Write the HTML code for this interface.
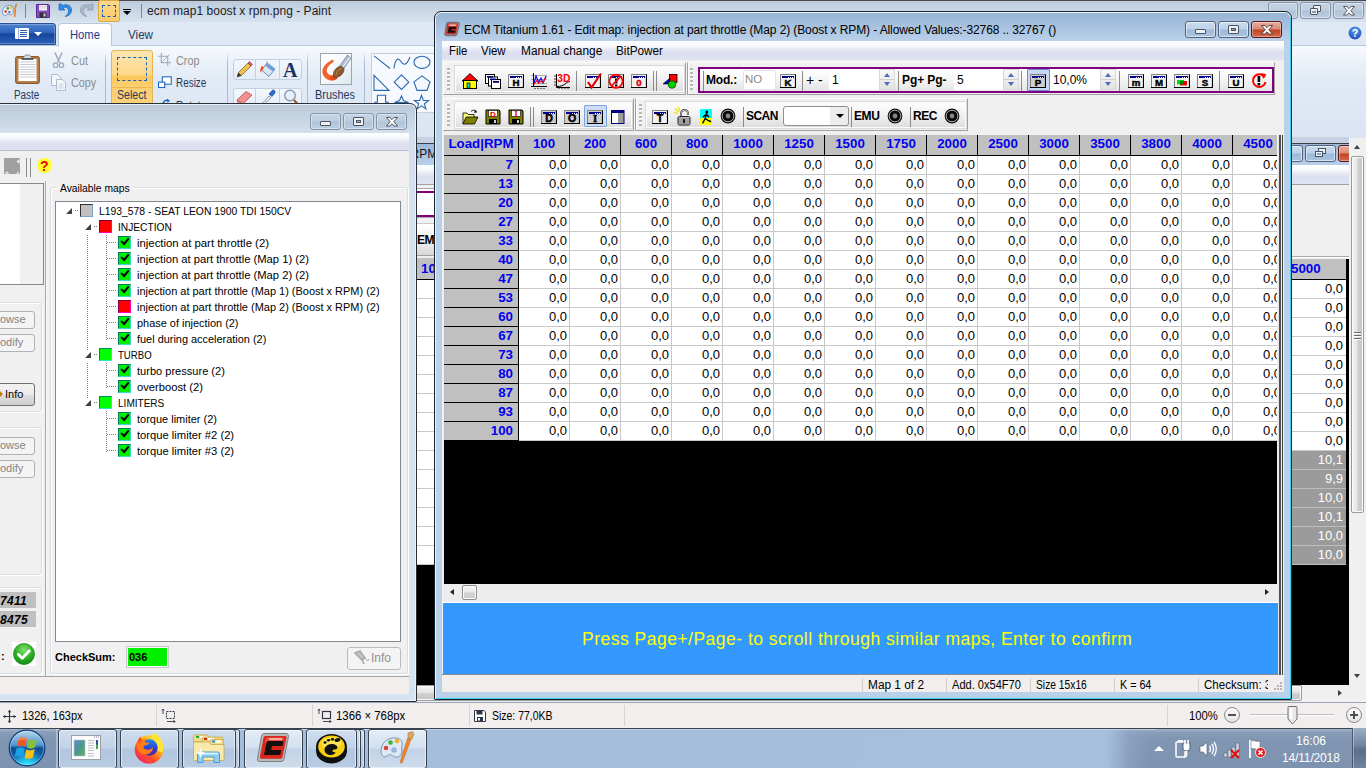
<!DOCTYPE html>
<html><head><meta charset="utf-8"><title>Paint</title>
<style>
*{box-sizing:border-box;margin:0;padding:0}
html,body{width:1366px;height:768px;overflow:hidden;background:#dfe9f5;font-family:"Liberation Sans",sans-serif;font-size:12px;color:#000}
.a{position:absolute}
.t{position:absolute;white-space:pre;line-height:1}
svg{position:absolute;overflow:visible}
/* ---------- paint ---------- */
#ptitle{left:0;top:0;width:1366px;height:22px;background:linear-gradient(#bccbdb 0,#c9d6e4 45%,#d7e2ee 100%);border-top:1px solid #4a4a4a}
#ptabs{left:0;top:22px;width:1366px;height:23px;background:#dfe9f5}
#pribbon{left:0;top:45px;width:1366px;height:93px;background:linear-gradient(#f7fafd 0,#ecf2f9 16%,#e0e9f5 40%,#dbe5f3 100%);border-top:1px solid #b6c6da}
.rsep{position:absolute;top:54px;width:1px;height:84px;background:linear-gradient(rgba(160,175,195,0),#a9b9cf 20%,#a9b9cf 100%)}
/* ---------- status / task ---------- */
#pstatus{left:0;top:702px;width:1366px;height:26px;background:#f1eeed;border-top:1px solid #9aa5b5}
#task{left:0;top:728px;width:1366px;height:40px;background:linear-gradient(#a3b4cb 0,#8a9eba 3px,#8196b3 9px,#7d92af 100%);border-top:1px solid #39424f}
#tband{left:56px;top:729px;box-shadow:inset 0 1px 0 rgba(255,255,255,.35);width:1100px;height:40px;background:linear-gradient(90deg,#a4bddb 0,#a6bfdd 95.5%,rgba(150,172,203,.5) 97.5%,rgba(129,150,179,0) 99.5%)}
.tb{position:absolute;top:729px;height:40px;border:1px solid #36424f;border-radius:3px;background:linear-gradient(#cfdeee 0,#c1d3e8 46%,#b1c6df 52%,#b8cce3 100%);box-shadow:inset 0 0 0 1px rgba(255,255,255,.5)}

/* ---------- ECM window ---------- */
#ecm{left:434px;top:11px;width:858px;height:689px;border:1px solid #1c2430;border-radius:7px 7px 1px 1px;background:linear-gradient(#97b3d3 0,#a7c1df 14px,#bad1ea 30px,#b9d1ea 100%);box-shadow:inset 0 0 0 1px #e9f2fb}
#ecm:after{content:"";position:absolute;right:0;top:6px;bottom:0;width:1px;background:#38d0f0}
#ecm:before{content:"";position:absolute;left:1px;right:0;bottom:0;height:1px;background:#38d0f0}
.cb{position:absolute;top:21px;width:31px;height:17px;border:1px solid #53627a;border-radius:3px;background:linear-gradient(#c9dbee 0,#bcd1e8 48%,#9db9d8 52%,#aac5e0 100%);box-shadow:inset 0 0 0 1px rgba(255,255,255,.55)}
.cb.x{border-color:#5a161a;background:linear-gradient(#e6ada0 0,#d98974 48%,#c0431f 52%,#d26a4c 100%);box-shadow:inset 0 0 0 1px rgba(255,255,255,.35)}
#emenu{left:442px;top:41px;width:842px;height:19px;background:linear-gradient(#fff 0,#f8f9fc 25%,#e7e9f4 45%,#dcdff0 60%,#dfe2f2 100%)}
#eclient{left:442px;top:60px;width:842px;height:632px;background:#f0f0f0}
.band{position:absolute;border:1px solid;border-color:#fff #a0a0a0 #a0a0a0 #fff;background:#f0f0f0}
.grip{position:absolute;width:3px;background:repeating-linear-gradient(#b5b5b5 0 2px,#fff 2px 3px,#f0f0f0 3px 4px)}
.tbx{position:absolute;border:1px solid #fcfcfc;background:linear-gradient(#fdfdfd 0,#f1f1f1 50%,#dedede 100%);box-shadow:0 0 0 1px #dadada}
.vs{position:absolute;width:1px;background:#8a8a8a;margin-top:1px;margin-bottom:1px}
.bt{position:absolute;white-space:pre;line-height:1;font-weight:bold;font-size:12px;letter-spacing:0;color:#000}
.inp{position:absolute;background:#fff;font-size:12px}
.spin{position:absolute;width:16px;height:21px;border:1px solid #d8d8d8;background:linear-gradient(#f8f8f8,#e3e3e3)}
.spin:before{content:"";position:absolute;left:4px;top:3px;border:3.5px solid transparent;border-top:0;border-bottom:4px solid #4c6cc0}
.spin:after{content:"";position:absolute;left:4px;bottom:3px;border:3.5px solid transparent;border-bottom:0;border-top:4px solid #4c6cc0}
.spin i{position:absolute;left:0;right:0;top:9px;height:1px;background:#d0d0d0}
#grid{left:444px;top:135px;width:833px;height:306px;background:#fff;overflow:hidden}
#gblack{left:444px;top:441px;width:833px;height:143px;background:#000}
.hc{position:absolute;top:0;height:21px;background:#c0c0c0;color:#0000f0;font-weight:bold;font-size:13.33px;line-height:18px;text-align:center;border-right:1px solid #000;border-bottom:1px solid #000;border-left:1px solid #000;white-space:pre}
.rh{position:absolute;left:0;width:75px;height:19px;background:#c0c0c0;color:#0000f0;font-weight:bold;font-size:13.33px;line-height:18px;text-align:right;padding-right:5px;border-right:1px solid #000;border-bottom:1px solid #000}
.row{position:absolute;left:75px;height:19px;width:780px;white-space:pre;font-size:13px;line-height:18px;color:#000;
 background:repeating-linear-gradient(90deg,transparent 0 50px,#c8c8c8 50px 51px);border-bottom:1px solid #c8c8c8}
.row span{display:inline-block;width:51px;text-align:right;padding-right:3px}
#ehs{left:444px;top:584px;width:833px;height:18px;background:#eeeded}
#eblue{left:443px;top:603px;width:835px;height:71px;background:#3399ff}
#estat{left:442px;top:675px;width:842px;height:17px;background:#f1eeed}
.sp{position:absolute;top:678px;height:15px;border-left:1px solid #cfcccb;font-size:12px;line-height:15px;padding-left:5px;white-space:pre}
.sp b{font-weight:normal;display:inline-block;transform-origin:0 50%}

/* ---------- left dialog ---------- */
#dlg{left:-10px;top:103px;width:427px;height:599px;border:1px solid #2b2f36;border-radius:7px 7px 1px 1px;background:linear-gradient(#bbcad9 0,#c5d4e2 14px,#d4e1ed 30px,#d6e3f1 100%);box-shadow:inset 0 0 0 1px #eaf1f8}
#dmenu{left:0;top:133px;width:409px;height:18px;background:linear-gradient(#fff 0,#f8f9fc 25%,#e7e9f4 45%,#dcdff0 60%,#dfe2f2 100%)}
#dclient{left:0;top:151px;width:409px;height:525px;background:#f0f0f0}
#dstat{left:0;top:676px;width:409px;height:18px;background:#f1eeed;border-top:1px solid #a6a6a6}
.cbi{position:absolute;top:113px;width:31px;height:17px;border:1px solid #8493a8;border-radius:3px;background:linear-gradient(#c5d4e4 0,#bccddf 48%,#b0c3d8 52%,#bdcee1 100%);box-shadow:inset 0 0 0 1px rgba(255,255,255,.4)}
.gb{position:absolute;border:1px solid #d5dfe5;border-radius:3px;box-shadow:inset 1px 1px 0 #fff,1px 1px 0 #fff}
.dbtn{position:absolute;border:1px solid #adb2b5;border-radius:3px;background:#f4f4f4;color:#838383;font-size:11px;line-height:15px;white-space:pre}
.tr{position:absolute;white-space:pre;font-size:11px;line-height:1;color:#000}
.ck{position:absolute;width:13px;height:13px;background:#00f000;border:1px solid;border-color:#007858 #38e0c0 #38e0c0 #007858}
.ck:after{content:"";position:absolute;left:2px;top:1px;width:6px;height:3px;border-left:2px solid #000;border-bottom:2px solid #000;transform:rotate(-50deg)}
.bx{position:absolute;width:13px;height:13px;border:1px solid}
.ex{position:absolute;width:0;height:0;border:3px solid transparent;border-right-color:#404040;border-bottom-color:#404040}
.dh{position:absolute;height:1px;background:repeating-linear-gradient(90deg,#808080 0 1px,transparent 1px 2px)}
.dv{position:absolute;width:1px;background:repeating-linear-gradient(#808080 0 1px,transparent 1px 2px)}

.rt{position:absolute;white-space:pre;line-height:1;font-size:12px;color:#1e395b;transform-origin:0 0}
.rt.d{color:#8d8d8d}
</style></head>
<body>
<!-- ================= PAINT BASE ================= -->
<div class="a" id="ptitle"></div>
<div class="a" id="ptabs"></div>
<div class="a" id="pribbon"></div>

<!-- ================= PAINT TOP ================= -->
<svg style="left:1px;top:2px" width="19" height="17" viewBox="0 0 17 16"><path d="M1 9c0-4 4-6.500 8-5.500 2 .5 2.500 2 2 3.500-.5 1.500.5 2.500-.5 4-1 1.500-2.500 1-3.500.5S5.500 11 4.500 12.500C3 13.500 1 12 1 9z" fill="#e8eef6" stroke="#7890b0" stroke-width=".9"/><circle cx="4" cy="9" r="1.200" fill="#e03030"/><circle cx="6" cy="6" r="1.200" fill="#30a030"/><circle cx="9" cy="5.500" r="1.200" fill="#f0c020"/><circle cx="7.500" cy="9.500" r="1.200" fill="#4080d0"/><path d="M13.500 1l1.500 1-1.500 4h-1.500z" fill="#c89050"/><path d="M12 6h1.800l-.5 8h-1.300z" fill="#f08020"/></svg>
<div class="a" style="left:25px;top:4px;width:1px;height:14px;background:#7a8594"></div>
<svg style="left:36px;top:4px" width="14" height="14" viewBox="0 0 14 14"><path d="M.5.500h12l1 1v12H.5z" fill="#8a4cc0" stroke="#5a2a90"/><rect x="3" y="1" width="8" height="5.500" fill="#f4f0f8"/><path d="M3 2.500h8M3 4h8" stroke="#c8c0d8" stroke-width=".6"/><rect x="3.500" y="8.500" width="7" height="5" fill="#303030"/><rect x="7.500" y="9.500" width="2" height="3" fill="#d0d0d0"/></svg>
<svg style="left:58px;top:3px" width="15" height="15" viewBox="0 0 15 15"><path d="M1 1v6h6L4.800 4.800C7 3.500 10 4.500 10.500 7.500c.3 2.500-1 4.500-3.500 6 4-.5 6.500-3 6.500-6.500C13.500 3 9 .5 5 2.500L3.200 1z" fill="#2f8fe8" stroke="#1560b8" stroke-width=".7"/></svg>
<svg style="left:79px;top:3px" width="15" height="15" viewBox="0 0 15 15"><path d="M14 1v6H8l2.200-2.200C8 3.500 5 4.500 4.500 7.500 4.200 10 5.500 12 8 13.500 4 13 1.500 10.500 1.500 7 1.500 3 6 .5 10 2.500L11.800 1z" fill="#a9b8cc" stroke="#8a9ab2" stroke-width=".7"/></svg>
<div class="a" style="left:98px;top:0;width:22px;height:22px;border:1px solid #d9aa4a;border-radius:2px;background:linear-gradient(#fcd88a,#fbcb6c)"></div>
<div class="a" style="left:102px;top:5px;width:14px;height:12px;border:1px dashed #1560b8"></div>
<div class="a" style="left:123px;top:9px;width:8px;height:1px;background:#000"></div><div class="a" style="left:123px;top:11px;border:4px solid transparent;border-bottom:0;border-top:4px solid #000"></div>
<div class="a" style="left:141px;top:4px;width:1px;height:14px;background:#7a8594"></div>
<div class="t" style="left:147px;top:5px;font-size:12px;color:#1e1e1e;letter-spacing:.02px">ecm map1 boost x rpm.png - Paint</div>
<div class="cbi" style="left:1268px;top:2px;height:17px;width:30px"></div>
<div class="cbi" style="left:1300px;top:2px;height:17px;width:31px"></div>
<div class="cbi" style="left:1333px;top:2px;height:17px;width:31px"></div>
<div class="a" style="left:1313px;top:5px;width:8px;height:7px;border:1px solid #4a5568;background:#f0f0f0;border-radius:1px"></div><div class="a" style="left:1310px;top:8px;width:8px;height:7px;border:1px solid #4a5568;background:#f0f0f0;border-radius:1px"></div><div class="a" style="left:1312px;top:11px;width:4px;height:2px;background:#8a9ab4;border:0"></div>
<svg style="left:1342.500px;top:6px" width="12" height="9.500" viewBox="0 0 14 11"><path d="M.5 .5h4L7 3l2.500-2.500h4L9.200 5.500l4.300 5h-4L7 8 4.500 10.500h-4L4.800 5.500z" fill="#f8f8f8" stroke="#4a4f58" stroke-width="1.100" stroke-linejoin="round"/></svg>
<svg style="left:1347px;top:25px" width="16" height="16" viewBox="0 0 18 18"><defs><radialGradient id="hg" cx=".5" cy=".3" r=".8"><stop offset="0" stop-color="#5ea0f0"/><stop offset="1" stop-color="#1038b0"/></radialGradient></defs><circle cx="9" cy="9" r="8" fill="url(#hg)" stroke="#dfe9f8" stroke-width="1.500"/><text x="9" y="13.500" text-anchor="middle" style="font-family:'Liberation Sans';font-weight:bold;font-size:12px" fill="#fff">?</text></svg>
<div class="a" style="left:-3px;top:23px;width:59px;height:22px;border:1px solid #2a4f98;border-radius:3px 3px 0 0;background:linear-gradient(#4d83d0 0,#2c62b8 45%,#17439a 50%,#2a64bc 100%);box-shadow:inset 0 0 0 1px rgba(255,255,255,.25)"></div>
<div class="a" style="left:15px;top:28px;width:14px;height:11px;background:#fff;border-radius:1px"></div><div class="a" style="left:20px;top:30px;width:7px;height:7px;background:repeating-linear-gradient(#2c62b8 0 1px,#fff 1px 2px)"></div><div class="a" style="left:18px;top:28px;width:1px;height:11px;background:#9ab0d0"></div>
<div class="a" style="left:34px;top:32px;border:4px solid transparent;border-bottom:0;border-top:4px solid #fff"></div>
<div class="a" style="left:58px;top:23px;width:54px;height:23px;border:1px solid #b9c9dd;border-bottom:0;border-radius:4px 4px 0 0;background:linear-gradient(#ffffff,#f8fbfe)"></div>
<div class="rt" style="left:70px;top:29px;color:#1d3b8c;transform:scaleX(0.937)">Home</div>
<div class="rt" style="left:128px;top:29px;transform:scaleX(0.969)">View</div>
<svg style="left:15px;top:53px" width="25" height="31" viewBox="0 0 25 31"><rect x=".7" y="3.700" width="23.600" height="26.600" rx="2" fill="#b98250" stroke="#8a5a2c" stroke-width="1.200"/><rect x="3.500" y="6" width="18" height="22" fill="#fff"/><path d="M4.500 9h16M4.500 11.500h16M4.500 14h16M4.500 16.500h16M4.500 19h16M4.500 21.500h16M4.500 24h16" stroke="#b4bcc8" stroke-width=".8"/><path d="M7 6l3.500-4h4L18 6z" fill="#d8dce0" stroke="#707880" stroke-width=".8"/><rect x="6.500" y="5" width="12" height="1.800" fill="#505860"/></svg>
<div class="rt" style="left:13.7px;top:89px;transform:scaleX(0.824)">Paste</div>
<svg style="left:53px;top:52px" width="11" height="17" viewBox="0 0 11 17"><path d="M2 .5l4.500 10M9 .5L4.500 10.500" stroke="#a0acc0" stroke-width="1.600" fill="none"/><circle cx="2.600" cy="13.200" r="2.200" fill="none" stroke="#a0acc0" stroke-width="1.300"/><circle cx="8.400" cy="13.200" r="2.200" fill="none" stroke="#a0acc0" stroke-width="1.300"/></svg>
<div class="rt d" style="left:70.6px;top:55px;transform:scaleX(0.910)">Cut</div>
<svg style="left:51px;top:74px" width="16" height="17" viewBox="0 0 16 17"><path d="M.5.500h6l3 3v8h-9z" fill="#f4f6fa" stroke="#b0bccc"/><path d="M5.500 5.500h6l3 3v8h-9z" fill="#f4f6fa" stroke="#b0bccc"/><path d="M7.500 10h5M7.500 12h5M7.500 14h5" stroke="#c0c8d4" stroke-width=".8"/></svg>
<div class="rt d" style="left:70.6px;top:77px;transform:scaleX(0.899)">Copy</div>
<div class="rsep" style="left:105px;top:52px;height:52px"></div>
<div class="a" style="left:111px;top:50px;width:42px;height:60px;border:1px solid #e3b552;border-radius:3px;background:linear-gradient(#fde6b0 0,#fcd88c 24px,#fbc85c 25px,#fbcf72 37px,#fbd27c 100%)"></div>
<div class="a" style="left:112px;top:87px;width:40px;height:1px;background:#e8b850"></div>
<div class="a" style="left:117px;top:57px;width:30px;height:24px;border:1px dashed #1560b8"></div>
<div class="rt" style="left:116.5px;top:89px;transform:scaleX(0.881)">Select</div>
<svg style="left:158px;top:53px" width="13" height="13" viewBox="0 0 16 16"><path d="M4 0v12h12M0 4h12v12" stroke="#9aa6ba" stroke-width="1.300" fill="none"/><path d="M5 11L14 2" stroke="#9aa6ba" stroke-width="1"/></svg>
<div class="rt d" style="left:175.7px;top:55px;transform:scaleX(0.899)">Crop</div>
<svg style="left:158px;top:76px" width="14" height="13" viewBox="0 0 18 16"><rect x="5.500" y=".7" width="11.500" height="9.500" fill="#fff" stroke="#1560b8" stroke-width="1.300"/><rect x=".7" y="7.500" width="8" height="7" fill="#fff" stroke="#1560b8" stroke-width="1.300"/></svg>
<div class="rt" style="left:175.7px;top:77px;transform:scaleX(0.826)">Resize</div>
<svg style="left:162px;top:99px" width="12" height="6" viewBox="0 0 12 6"><path d="M1 6c0-3 2-5 5-5" stroke="#1560b8" stroke-width="1.600" fill="none"/><path d="M5 0l3 1.500L5.500 4z" fill="#1560b8"/></svg>
<div class="rt" style="left:175.7px;top:100px;height:4px;overflow:hidden;transform:scaleX(0.862)">Rotate</div>
<div class="rsep" style="left:227px;top:52px;height:52px"></div>
<div class="a" style="left:233px;top:59px;width:69px;height:21px;border:1px solid #c3d0e2;border-radius:3px;background:linear-gradient(#f3f7fc,#e4ecf7)"></div>
<div class="a" style="left:255px;top:60px;width:1px;height:19px;background:#c3d0e2"></div><div class="a" style="left:279px;top:60px;width:1px;height:19px;background:#c3d0e2"></div>
<div class="a" style="left:233px;top:88px;width:69px;height:21px;border:1px solid #c3d0e2;border-radius:3px;background:linear-gradient(#f3f7fc,#e4ecf7)"></div>
<div class="a" style="left:255px;top:89px;width:1px;height:19px;background:#c3d0e2"></div><div class="a" style="left:279px;top:89px;width:1px;height:19px;background:#c3d0e2"></div>
<svg style="left:236px;top:61px" width="17" height="17" viewBox="0 0 17 17"><path d="M1 16l1.500-4.500L12 2l3 3-9.500 9.500z" fill="#f0c050" stroke="#8a6a20" stroke-width=".8"/><path d="M12 2l1.500-1.500 3 3L15 5z" fill="#e06060" stroke="#803030" stroke-width=".6"/><path d="M1 16l1.500-4.500 3 3z" fill="#303030"/></svg>
<svg style="left:259px;top:60px" width="18" height="18" viewBox="0 0 18 18"><path d="M8 3l8 6-6 7.500L2.500 10z" fill="#d8e6f6" stroke="#6080a8" stroke-width=".9"/><path d="M8 3l8 6-2 2.500L6 5.500z" fill="#6aa0e0"/><path d="M3.500 5.500C1.500 7 .8 10 1.500 13c.8-2 1.500-3 3-4z" fill="#f05010"/><path d="M8 1.500v5" stroke="#a0a8b8" stroke-width="1.200"/></svg>
<div class="t" style="left:283px;top:59px;font:bold 20px 'Liberation Serif';color:#1c2f60">A</div>
<svg style="left:236px;top:90px" width="17" height="15" viewBox="0 0 17 15"><path d="M1 10l9-8.500 6 3.500-9 9-4.500-.5z" fill="#f09090" stroke="#c05050" stroke-width=".8"/><path d="M1 10l5.500 3.500" stroke="#c05050" stroke-width=".8"/></svg>
<svg style="left:260px;top:89px" width="17" height="16" viewBox="0 0 17 16"><path d="M2 15l7-8 2 2-7.500 6.500z" fill="#e8eef4" stroke="#7888a0" stroke-width=".8"/><path d="M9 5l3-3.500c1.500-1.500 4 .5 2.800 2.500L12 7.500z" fill="#2a70d0" stroke="#1a4890" stroke-width=".7"/></svg>
<svg style="left:283px;top:89px" width="17" height="16" viewBox="0 0 17 16"><circle cx="7" cy="6.500" r="5.300" fill="#e4f0fa" stroke="#8a9ab0" stroke-width="1.400"/><path d="M11 11l4 4.500" stroke="#a06030" stroke-width="2.400"/></svg>
<div class="rsep" style="left:307px;top:52px;height:52px"></div>
<div class="a" style="left:320px;top:53px;width:32px;height:32px;border:1px solid #a0a4a8;background:linear-gradient(135deg,#fff 0,#f4f8fc 50%,#dce8f0 100%)"></div>
<svg style="left:321px;top:54px" width="30" height="30" viewBox="0 0 30 30"><path d="M11.500 5.500C9 7 3 10 1.500 16c-1 5 3 9.500 8 10.500 3 .5 5-.5 6.500-2l-3-4c-3 1.500-6 .5-7-2.500-1-3.500 2-7.500 6.500-10 .5-1.500-.5-2.500-1.500-2.500z" fill="#f0622a"/><path d="M8 24c2.500 2.500 6 2 8.500.5l-2.500-3.500c-2 1.200-4 2.200-6 3z" fill="#d8481a"/><path d="M26.500 1L30 4 21.500 16.500 17.500 13.500z" fill="#aebfd6" stroke="#586a84" stroke-width=".6"/><path d="M28.800 3.300L20.500 15" stroke="#fff" stroke-width="1.200" opacity=".8"/><path d="M12.500 21c-.5-4 3-8 6.500-8.500 2.500-.3 4.500 1.500 4 4-.8 3.500-4 6.500-8 7-1.500.2-2.300-1-2.500-2.500z" fill="#8c5a30" stroke="#5c3818" stroke-width=".6"/><path d="M15 21c.5-3 2.500-5.500 5-6.500" stroke="#b88a58" stroke-width="1" fill="none"/></svg>
<div class="rt" style="left:315px;top:89px;transform:scaleX(0.908)">Brushes</div>
<div class="rsep" style="left:364px;top:52px;height:52px"></div>
<div class="a" style="left:371px;top:53px;width:70px;height:60px;border:1px solid #c3d0e2;background:#f6f9fd"></div>
<svg style="left:371px;top:53px" width="66" height="60" viewBox="0 0 66 60" fill="#f4f8fc" stroke="#2a68b2" stroke-width="1.100"><path d="M3 2.900L19 15.500" fill="none"/><path d="M23 15.500c1-9 4-11.500 6.500-7.500s5.500 6 9.500-4" fill="none"/><ellipse cx="51" cy="9.300" rx="8" ry="6.100"/><path d="M3 22.400V37.400H18z"/><path d="M30.500 21.900l7.300 7.300-7.300 7.300-7.300-7.300z"/><path d="M51 22.900l8 6-3 8.500H46l-3-8.500z"/><path d="M3 49.300H6.400V42.300H14.600V49.300H18" fill="none"/><path d="M30.500 42.900l2 4.600 5 2h-14l5-2z"/><path d="M50.5 42.3L52.3 47.4L57.6 47.5L53.4 50.7L54.9 55.9L50.5 52.8L46.1 55.9L47.6 50.7L43.4 47.5L48.7 47.4z"/></svg>

<!-- ================= CANVAS STRIPS ================= -->
<div class="a" style="left:417px;top:137px;width:17px;height:548px;overflow:hidden;background:#fff">
<div class="a" style="left:0;top:0;width:17px;height:6px;background:#c7d1e3"></div><div class="a" style="left:0;top:6px;width:17px;height:1px;background:#3a3f48"></div>
<div class="a" style="left:0;top:7px;width:17px;height:21px;background:linear-gradient(#9db8d8,#b7cfe9)"></div>
<div class="t" style="left:-6.500px;top:11px;font-size:12px;color:#101820">RPM)</div>
<div class="a" style="left:0;top:28px;width:17px;height:19px;background:linear-gradient(#fff 0,#f8f9fc 25%,#e7e9f4 45%,#dcdff0 60%,#dfe2f2 100%)"></div>
<div class="a" style="left:0;top:47px;width:17px;height:7px;background:linear-gradient(#a0a0a0 0 1px,#f0f0f0 1px 4px,#a8a8a8 4px 5px,#fff 5px)"></div>
<div class="a" style="left:0;top:54px;width:17px;height:2px;background:#800080"></div>
<div class="a" style="left:0;top:78px;width:17px;height:2px;background:#800080"></div>
<div class="a" style="left:0;top:80px;width:17px;height:9px;background:linear-gradient(#a8a8a8 0 1px,#f0f0f0 1px 6px,#c8c8c8 6px 7px,#fff 7px)"></div>
<div class="a" style="left:0;top:89px;width:17px;height:29px;background:linear-gradient(#fdfdfd 0,#f1f1f1 50%,#d6d6d6 100%)"></div>
<div class="a" style="left:0;top:118px;width:17px;height:3px;background:linear-gradient(#a0a0a0 0 1px,#f0f0f0 1px)"></div>
<div class="bt" style="left:0;top:97px;letter-spacing:-.4px">EM</div>
<div class="a" style="left:0;top:121px;width:17px;height:22px;background:#c0c0c0;border-bottom:1px solid #000"></div>
<div class="t" style="left:4px;top:125px;font-size:13.33px;font-weight:bold;color:#0000f0">1000</div>
<div class="a" style="left:0;top:161px;width:17px;height:1px;background:#c8c8c8"></div>
<div class="a" style="left:0;top:180px;width:17px;height:1px;background:#c8c8c8"></div>
<div class="a" style="left:0;top:199px;width:17px;height:1px;background:#c8c8c8"></div>
<div class="a" style="left:0;top:218px;width:17px;height:1px;background:#c8c8c8"></div>
<div class="a" style="left:0;top:237px;width:17px;height:1px;background:#c8c8c8"></div>
<div class="a" style="left:0;top:256px;width:17px;height:1px;background:#c8c8c8"></div>
<div class="a" style="left:0;top:275px;width:17px;height:1px;background:#c8c8c8"></div>
<div class="a" style="left:0;top:294px;width:17px;height:1px;background:#c8c8c8"></div>
<div class="a" style="left:0;top:313px;width:17px;height:1px;background:#c8c8c8"></div>
<div class="a" style="left:0;top:332px;width:17px;height:1px;background:#c8c8c8"></div>
<div class="a" style="left:0;top:351px;width:17px;height:1px;background:#c8c8c8"></div>
<div class="a" style="left:0;top:370px;width:17px;height:1px;background:#c8c8c8"></div>
<div class="a" style="left:0;top:389px;width:17px;height:1px;background:#c8c8c8"></div>
<div class="a" style="left:0;top:408px;width:17px;height:1px;background:#c8c8c8"></div>
<div class="a" style="left:0;top:427px;width:17px;height:1px;background:#c8c8c8"></div>
<div class="a" style="left:0;top:428px;width:17px;height:120px;background:#000"></div>
</div>
<div class="a" style="left:1292px;top:137px;width:57px;height:548px;overflow:hidden;background:#f0f0f0">
<div class="a" style="left:0;top:0;width:57px;height:6px;background:#c7d1e3"></div><div class="a" style="left:0;top:6px;width:57px;height:1px;background:#3a3f48"></div>
<div class="a" style="left:0;top:7px;width:57px;height:21px;background:linear-gradient(#9db8d8,#b7cfe9)"></div>
<div class="cb" style="left:-20px;top:8px"></div><div class="cb" style="left:13px;top:8px"></div><div class="cb x" style="left:46px;top:8px"></div>
<div class="a" style="left:26px;top:11px;width:8px;height:6px;border:1px solid #4a5568;background:#f0f0f0"></div><div class="a" style="left:23px;top:14px;width:8px;height:6px;border:1px solid #4a5568;background:#f0f0f0"></div><div class="a" style="left:25px;top:16px;width:4px;height:2px;background:#8aa6c8"></div>
<div class="a" style="left:0;top:28px;width:57px;height:19px;background:linear-gradient(#fff 0,#f8f9fc 25%,#e7e9f4 45%,#dcdff0 60%,#dfe2f2 100%)"></div>
<div class="a" style="left:0;top:47px;width:57px;height:1px;background:#a0a0a0"></div>
<div class="a" style="left:0;top:119px;width:57px;height:2px;background:linear-gradient(#a8a8a8 0 1px,#fff 1px)"></div>
<div class="a" style="left:0;top:122px;width:54px;height:21px;background:#c0c0c0;border-bottom:1px solid #000"></div>
<div class="t" style="left:-1px;top:125px;font-size:13.33px;font-weight:bold;color:#0000f0">5000</div>
<div class="a" style="left:0;top:143px;width:54px;height:19px;background:#fff;border-bottom:1px solid #c8c8c8;color:#000;font-size:13px;line-height:18px;text-align:right;padding-right:3px">0,0</div>
<div class="a" style="left:0;top:162px;width:54px;height:19px;background:#fff;border-bottom:1px solid #c8c8c8;color:#000;font-size:13px;line-height:18px;text-align:right;padding-right:3px">0,0</div>
<div class="a" style="left:0;top:181px;width:54px;height:19px;background:#fff;border-bottom:1px solid #c8c8c8;color:#000;font-size:13px;line-height:18px;text-align:right;padding-right:3px">0,0</div>
<div class="a" style="left:0;top:200px;width:54px;height:19px;background:#fff;border-bottom:1px solid #c8c8c8;color:#000;font-size:13px;line-height:18px;text-align:right;padding-right:3px">0,0</div>
<div class="a" style="left:0;top:219px;width:54px;height:19px;background:#fff;border-bottom:1px solid #c8c8c8;color:#000;font-size:13px;line-height:18px;text-align:right;padding-right:3px">0,0</div>
<div class="a" style="left:0;top:238px;width:54px;height:19px;background:#fff;border-bottom:1px solid #c8c8c8;color:#000;font-size:13px;line-height:18px;text-align:right;padding-right:3px">0,0</div>
<div class="a" style="left:0;top:257px;width:54px;height:19px;background:#fff;border-bottom:1px solid #c8c8c8;color:#000;font-size:13px;line-height:18px;text-align:right;padding-right:3px">0,0</div>
<div class="a" style="left:0;top:276px;width:54px;height:19px;background:#fff;border-bottom:1px solid #c8c8c8;color:#000;font-size:13px;line-height:18px;text-align:right;padding-right:3px">0,0</div>
<div class="a" style="left:0;top:295px;width:54px;height:19px;background:#fff;border-bottom:1px solid #c8c8c8;color:#000;font-size:13px;line-height:18px;text-align:right;padding-right:3px">0,0</div>
<div class="a" style="left:0;top:314px;width:54px;height:19px;background:#9b9b9b;border-bottom:1px solid #bdbdbd;color:#fff;font-size:13px;line-height:18px;text-align:right;padding-right:3px">10,1</div>
<div class="a" style="left:0;top:333px;width:54px;height:19px;background:#9b9b9b;border-bottom:1px solid #bdbdbd;color:#fff;font-size:13px;line-height:18px;text-align:right;padding-right:3px">9,9</div>
<div class="a" style="left:0;top:352px;width:54px;height:19px;background:#9b9b9b;border-bottom:1px solid #bdbdbd;color:#fff;font-size:13px;line-height:18px;text-align:right;padding-right:3px">10,0</div>
<div class="a" style="left:0;top:371px;width:54px;height:19px;background:#9b9b9b;border-bottom:1px solid #bdbdbd;color:#fff;font-size:13px;line-height:18px;text-align:right;padding-right:3px">10,1</div>
<div class="a" style="left:0;top:390px;width:54px;height:19px;background:#9b9b9b;border-bottom:1px solid #bdbdbd;color:#fff;font-size:13px;line-height:18px;text-align:right;padding-right:3px">10,0</div>
<div class="a" style="left:0;top:409px;width:54px;height:19px;background:#9b9b9b;border-bottom:1px solid #bdbdbd;color:#fff;font-size:13px;line-height:18px;text-align:right;padding-right:3px">10,0</div>
<div class="a" style="left:0;top:428px;width:57px;height:120px;background:#000"></div>
<div class="a" style="left:54px;top:122px;width:3px;height:426px;background:#000"></div>
</div>
<div class="a" style="left:1349px;top:138px;width:17px;height:547px;background:#f0f0f0"></div>
<div class="a" style="left:1354px;top:145px;border:3.500px solid transparent;border-top:0;border-bottom:4px solid #404040"></div>
<div class="a" style="left:1351px;top:156px;width:13px;height:357px;border:1px solid #9a9a9a;border-radius:2px;background:linear-gradient(90deg,#f4f4f4 0,#e6e6e6 45%,#cfcfcf 55%,#c6c6c6 100%);box-shadow:inset 0 0 0 1px #fafafa"></div>
<div class="a" style="left:1354px;top:332px;width:7px;height:2px;background:linear-gradient(#6a6a6a 0 1px,#fff 1px)"></div>
<div class="a" style="left:1354px;top:335px;width:7px;height:2px;background:linear-gradient(#6a6a6a 0 1px,#fff 1px)"></div>
<div class="a" style="left:1354px;top:338px;width:7px;height:2px;background:linear-gradient(#6a6a6a 0 1px,#fff 1px)"></div>
<div class="a" style="left:1354px;top:674px;border:3.500px solid transparent;border-bottom:0;border-top:4px solid #404040"></div>
<div class="a" style="left:0;top:685px;width:1349px;height:17px;background:#f0f0f0"></div>
<div class="a" style="left:380px;top:685px;width:922px;height:16px;border:1px solid #9a9a9a;border-radius:2px;background:linear-gradient(#f4f4f4 0,#e6e6e6 45%,#cfcfcf 55%,#c6c6c6 100%);box-shadow:inset 0 0 0 1px #fafafa"></div>
<div class="a" style="left:1338px;top:690px;border:3.500px solid transparent;border-right:0;border-left:4px solid #404040"></div>
<div class="a" style="left:1349px;top:685px;width:17px;height:17px;background:#f0f0f0"></div>

<!-- ================= LEFT DIALOG ================= -->
<div class="a" id="dlg"></div>
<div class="cbi" style="left:310px"></div><div class="cbi" style="left:343px"></div><div class="cbi" style="left:376px"></div>
<div class="a" style="left:320px;top:121px;width:11px;height:5px;background:#f0f0f0;border:1px solid #4a5568;border-radius:1px"></div>
<div class="a" style="left:353px;top:117px;width:11px;height:9px;background:#f0f0f0;border:1px solid #4a5568;border-radius:1px"></div><div class="a" style="left:356px;top:120px;width:5px;height:3px;background:#a9bbd0;border:1px solid #4a5568"></div>
<svg style="left:385.500px;top:116.500px" width="12" height="9.500" viewBox="0 0 14 11"><path d="M.5 .5h4L7 3l2.500-2.500h4L9.200 5.500l4.300 5h-4L7 8 4.500 10.500h-4L4.800 5.500z" fill="#f8f8f8" stroke="#4a4f58" stroke-width="1.100" stroke-linejoin="round"/></svg>
<div class="a" id="dmenu"></div><div class="a" style="left:0;top:150px;width:409px;height:1px;background:#b9bfd0"></div><div class="a" id="dclient"></div><div class="a" id="dstat"></div>
<div class="a" style="left:4px;top:158px;width:16px;height:16px;background:#a0a0a0"></div>
<svg style="left:4px;top:158px" width="16" height="16" viewBox="0 0 16 16"><path d="M15.500 1v5l-3-2.500zM.5 15.500h5l-2.500-2zM15.500 15.500h-3.500l1.800-1.800z" fill="#f4f4f4"/></svg>
<div class="vs" style="left:26px;top:157px;height:19px"></div><div class="vs" style="left:30px;top:157px;height:19px"></div>
<div class="a" style="left:37px;top:158px;width:15px;height:15px;border-radius:50%;background:#ffff30;background-image:radial-gradient(#fff 30%,transparent 31%);background-size:2px 2px"></div><div class="t" style="left:40px;top:159px;font-size:14px;font-weight:bold;color:#e80000">?</div>
<div class="a" style="left:0;top:183px;width:44px;height:102px;background:linear-gradient(90deg,#fff 0 20px,#f0f0f0 20px);border:1px solid #828790;border-left:0"></div>
<div class="gb" style="left:-5px;top:302px;width:47px;height:110px"></div>
<div class="dbtn" style="left:-5px;top:311px;width:40px;height:18px;padding-left:4px">owse</div>
<div class="dbtn" style="left:-5px;top:334px;width:40px;height:18px;padding-left:4px">odify</div>
<div class="dbtn" style="left:-5px;top:383px;width:40px;height:23px;padding-left:9px;line-height:20px;color:#000;border-color:#707070;background:linear-gradient(#f2f2f2 0,#ebebeb 50%,#dddddd 51%,#cfcfcf 100%)">Info</div>
<div class="a" style="left:0;top:391px;border:3px solid transparent;border-left:3px solid #c08000;border-right:0"></div>
<div class="gb" style="left:-5px;top:427px;width:47px;height:148px"></div>
<div class="dbtn" style="left:-5px;top:437px;width:40px;height:18px;padding-left:4px">owse</div>
<div class="dbtn" style="left:-5px;top:460px;width:40px;height:18px;padding-left:4px">odify</div>
<div class="gb" style="left:-5px;top:587px;width:47px;height:87px"></div>
<div class="a" style="left:0;top:592px;width:36px;height:16px;background:#c0c0c0"></div><div class="t" style="left:0;top:594px;font:italic bold 12px 'Liberation Sans';letter-spacing:.3px">7411</div>
<div class="a" style="left:0;top:611px;width:36px;height:16px;background:#c0c0c0"></div><div class="t" style="left:0;top:613px;font:italic bold 12px 'Liberation Sans';letter-spacing:.3px">8475</div>
<div class="t" style="left:1px;top:651px;font-size:11px;font-weight:bold">:</div>
<div class="a" style="left:12px;top:642px;width:24px;height:24px;background:#fff"></div>
<svg style="left:13px;top:643px" width="22" height="22" viewBox="0 0 22 22"><defs><radialGradient id="gg" cx=".5" cy=".3" r=".7"><stop offset="0" stop-color="#7fe06a"/><stop offset=".6" stop-color="#2fb025"/><stop offset="1" stop-color="#138a12"/></radialGradient></defs><circle cx="11" cy="11" r="10.500" fill="url(#gg)" stroke="#1c8a1c" stroke-width=".8"/><path d="M5.500 11.500l3.800 3.800 7-7.500" stroke="#fff" stroke-width="2.800" fill="none" stroke-linecap="round" stroke-linejoin="round"/></svg>
<div class="a" style="left:45px;top:181px;width:2px;height:495px;background:linear-gradient(90deg,#a6a6a6 0 1px,#fbfbfb 1px)"></div><div class="gb" style="left:50px;top:187px;width:358px;height:487px"></div>
<div class="a" style="left:57px;top:183px;width:76px;height:12px;background:#f0f0f0"></div><div class="t" style="left:60px;top:183px;font-size:11px;transform-origin:0 0;transform:scaleX(.935)">Available maps</div>
<div class="a" style="left:55px;top:201px;width:346px;height:441px;background:#fff;border:1px solid #828790"></div>
<div class="ex" style="left:66px;top:208px"></div><div class="dh" style="left:75px;top:210px;width:4px"></div>
<div class="bx" style="left:80px;top:204px;background:#c0c0c0;border-color:#303030 #7da2ce #7da2ce #303030"></div>
<div class="tr" style="left:99px;top:206px;transform-origin:0 0;transform:scaleX(0.941)">L193_578 - SEAT LEON 1900 TDI 150CV</div>
<div class="ex" style="left:85px;top:224px"></div><div class="dh" style="left:94px;top:226px;width:4px"></div>
<div class="bx" style="left:99px;top:220px;background:#ff0000;border-color:#800040 #ff00c0 #ff00c0 #800040"></div>
<div class="tr" style="left:118px;top:222px;transform-origin:0 0;transform:scaleX(0.928)">INJECTION</div>
<div class="dh" style="left:107px;top:242px;width:10px"></div>
<div class="ck" style="left:118px;top:236px"></div>
<div class="tr" style="left:137px;top:238px;transform-origin:0 0;transform:scaleX(1.033)">injection at part throttle (2)</div>
<div class="dh" style="left:107px;top:258px;width:10px"></div>
<div class="ck" style="left:118px;top:252px"></div>
<div class="tr" style="left:137px;top:254px;transform-origin:0 0;transform:scaleX(1.019)">injection at part throttle (Map 1) (2)</div>
<div class="dh" style="left:107px;top:274px;width:10px"></div>
<div class="ck" style="left:118px;top:268px"></div>
<div class="tr" style="left:137px;top:270px;transform-origin:0 0;transform:scaleX(1.019)">injection at part throttle (Map 2) (2)</div>
<div class="dh" style="left:107px;top:290px;width:10px"></div>
<div class="ck" style="left:118px;top:284px"></div>
<div class="tr" style="left:137px;top:286px;transform-origin:0 0;transform:scaleX(0.997)">injection at part throttle (Map 1) (Boost x RPM) (2)</div>
<div class="dh" style="left:107px;top:306px;width:10px"></div>
<div class="bx" style="left:118px;top:300px;background:#ff0000;border-color:#800040 #ff00c0 #ff00c0 #800040"></div>
<div class="tr" style="left:137px;top:302px;transform-origin:0 0;transform:scaleX(0.997)">injection at part throttle (Map 2) (Boost x RPM) (2)</div>
<div class="dh" style="left:107px;top:322px;width:10px"></div>
<div class="ck" style="left:118px;top:316px"></div>
<div class="tr" style="left:137px;top:318px;transform-origin:0 0;transform:scaleX(0.994)">phase of injection (2)</div>
<div class="dh" style="left:107px;top:338px;width:10px"></div>
<div class="ck" style="left:118px;top:332px"></div>
<div class="tr" style="left:137px;top:334px;transform-origin:0 0;transform:scaleX(0.993)">fuel during acceleration (2)</div>
<div class="ex" style="left:85px;top:352px"></div><div class="dh" style="left:94px;top:354px;width:4px"></div>
<div class="bx" style="left:99px;top:348px;background:#00ff00;border-color:#008858 #30e8c0 #30e8c0 #008858"></div>
<div class="tr" style="left:118px;top:350px;transform-origin:0 0;transform:scaleX(0.873)">TURBO</div>
<div class="dh" style="left:107px;top:370px;width:10px"></div>
<div class="ck" style="left:118px;top:364px"></div>
<div class="tr" style="left:137px;top:366px;transform-origin:0 0;transform:scaleX(1.005)">turbo pressure (2)</div>
<div class="dh" style="left:107px;top:386px;width:10px"></div>
<div class="ck" style="left:118px;top:380px"></div>
<div class="tr" style="left:137px;top:382px;transform-origin:0 0;transform:scaleX(1.018)">overboost (2)</div>
<div class="ex" style="left:85px;top:400px"></div><div class="dh" style="left:94px;top:402px;width:4px"></div>
<div class="bx" style="left:99px;top:396px;background:#00ff00;border-color:#008858 #30e8c0 #30e8c0 #008858"></div>
<div class="tr" style="left:118px;top:398px;transform-origin:0 0;transform:scaleX(0.913)">LIMITERS</div>
<div class="dh" style="left:107px;top:418px;width:10px"></div>
<div class="ck" style="left:118px;top:412px"></div>
<div class="tr" style="left:137px;top:414px;transform-origin:0 0;transform:scaleX(0.999)">torque limiter (2)</div>
<div class="dh" style="left:107px;top:434px;width:10px"></div>
<div class="ck" style="left:118px;top:428px"></div>
<div class="tr" style="left:137px;top:430px;transform-origin:0 0;transform:scaleX(1.018)">torque limiter #2 (2)</div>
<div class="dh" style="left:107px;top:450px;width:10px"></div>
<div class="ck" style="left:118px;top:444px"></div>
<div class="tr" style="left:137px;top:446px;transform-origin:0 0;transform:scaleX(1.018)">torque limiter #3 (2)</div>
<div class="dv" style="left:87px;top:235px;height:115px"></div><div class="dv" style="left:87px;top:363px;height:35px"></div>
<div class="dv" style="left:106px;top:235px;height:105px"></div>
<div class="dv" style="left:106px;top:363px;height:25px"></div>
<div class="dv" style="left:106px;top:411px;height:41px"></div>
<div class="t" style="left:55px;top:652px;font-size:11px;font-weight:bold">CheckSum:</div>
<div class="a" style="left:126px;top:646px;width:43px;height:22px;border:1px solid #c8c8c8;background:#f8f8f8"></div><div class="a" style="left:128px;top:648px;width:39px;height:18px;background:#00f000"></div><div class="t" style="left:129px;top:652px;font-size:11px;font-weight:bold">036</div>
<div class="dbtn" style="left:347px;top:647px;width:54px;height:23px;line-height:20px;padding-left:23px;font-size:12px;color:#909090;border-color:#b8bcbf">Info</div>
<svg style="left:353px;top:650px" width="18" height="16" viewBox="0 0 18 16"><path d="M2 3l5-2 5 7-3 2zM9 10l2 4" stroke="#a8a8a8" stroke-width="1.600" fill="#c4c4c4"/><path d="M13 9l1.500 2 1.500-2" stroke="#a8a8a8" fill="none"/></svg>


<!-- ================= ECM WINDOW ================= -->
<div class="a" id="ecm"></div>
<div class="cb" style="left:1185px"></div>
<div class="cb" style="left:1218px"></div>
<div class="cb x" style="left:1251px"></div>
<div class="a" id="emenu"></div>
<div class="a" id="eclient"></div>
<svg style="left:444px;top:21px" width="16" height="16" viewBox="0 0 17 16"><path d="M4 .800h10.500a1.800 1.800 0 0 1 1.700 2.200L14 13.300a2.300 2.300 0 0 1-2.200 1.900H2.300A1.600 1.600 0 0 1 .8 13.200L2.600 2.600A2.200 2.200 0 0 1 4 .8z" fill="#8c8c8c" stroke="#4a4040" stroke-width=".6"/><path d="M4.600 2.200h9a1 1 0 0 1 1 1.300l-1.800 9a1.500 1.500 0 0 1-1.400 1.200H3.200a1 1 0 0 1-1-1.200L3.500 3.300a1.300 1.300 0 0 1 1.100-1.100z" fill="#d8281e"/><path d="M5 3h8.500l-.4 2H4.600z" fill="#f47a6a"/><path d="M5.200 5.500h8l-.5 2.400H8.400l-.3 1.700h4.200l-.5 2.400H3.900z" fill="#1a1010"/><path d="M6 4h6.500" stroke="#ffe0d8" stroke-width=".9"/></svg>
<div class="t" style="left:464px;top:24px;font-size:12px;letter-spacing:-.105px">ECM Titanium 1.61 - Edit map: injection at part throttle (Map 2) (Boost x RPM) - Allowed Values:-32768 .. 32767 ()</div>
<div class="a" style="left:1195px;top:29px;width:11px;height:5px;background:#f0f0f0;border:1px solid #4a5568;border-radius:1px"></div>
<div class="a" style="left:1228px;top:25px;width:11px;height:9px;background:#f0f0f0;border:1px solid #4a5568;border-radius:1px"></div><div class="a" style="left:1231px;top:28px;width:5px;height:3px;background:#8aa6c8;border:1px solid #4a5568"></div>
<svg style="left:1260.500px;top:24.500px" width="12" height="9.500" viewBox="0 0 14 11"><path d="M.5 .5h4L7 3l2.500-2.500h4L9.200 5.500l4.300 5h-4L7 8 4.500 10.500h-4L4.800 5.500z" fill="#f4f4f4" stroke="#4a3030" stroke-width="1" stroke-linejoin="round"/></svg>
<div class="t" style="left:449.1px;top:45px;font-size:12px;transform-origin:0 0;transform:scaleX(0.94)">File</div>
<div class="t" style="left:481.3px;top:45px;font-size:12px;transform-origin:0 0;transform:scaleX(0.953)">View</div>
<div class="t" style="left:520.5px;top:45px;font-size:12px;transform-origin:0 0;transform:scaleX(0.99)">Manual change</div>
<div class="t" style="left:616.3px;top:45px;font-size:12px;transform-origin:0 0;transform:scaleX(0.977)">BitPower</div>
<svg width="0" height="0" style="display:none"><defs>
<symbol id="w" viewBox="0 0 16 16"><rect x="0" y="1" width="16" height="14" fill="#f2f2f2"/><path d="M.5 15V1.5H16" stroke="#808080" fill="none"/><path d="M0 14.500H15.500V1.500" stroke="#000" fill="none" stroke-width="1.2"/><rect x="2" y="3" width="12" height="2" fill="#000090"/><rect x="8" y="4" width="1" height="1" fill="#fff"/><rect x="10" y="4" width="1" height="1" fill="#fff"/><rect x="12" y="4" width="1" height="1" fill="#fff"/></symbol>
<symbol id="wg" viewBox="0 0 16 16"><rect x="0" y="1" width="16" height="14" fill="#cfcfcf"/><path d="M.5 15V1.5H16" stroke="#808080" fill="none"/><path d="M0 14.500H15.500V1.500" stroke="#000" fill="none" stroke-width="1.2"/><rect x="2" y="3" width="12" height="2" fill="#000090"/><rect x="8" y="4" width="1" height="1" fill="#fff"/><rect x="10" y="4" width="1" height="1" fill="#fff"/><rect x="12" y="4" width="1" height="1" fill="#fff"/></symbol>
<symbol id="fl" viewBox="0 0 16 16"><path d="M1 1h13l1 1v13H1z" fill="#808000" stroke="#000"/><rect x="3.5" y="1.5" width="9" height="6" fill="#fff" stroke="#000" stroke-width=".6"/><rect x="4" y="10" width="8" height="5" fill="#000"/><rect x="9" y="11" width="2" height="3" fill="#d0d0d0"/></symbol>
<symbol id="kn" viewBox="0 0 16 16"><circle cx="8" cy="8" r="7.400" fill="#0a0a0a"/><circle cx="8" cy="8" r="5.900" fill="none" stroke="#d8d8d8" stroke-width=".8"/><circle cx="8" cy="8" r="2.400" fill="#858585"/></symbol>
</defs></svg>
<div class="band" style="left:443px;top:62px;width:243px;height:33px"></div>
<div class="grip" style="left:447px;top:68px;height:22px"></div>
<div class="tbx" style="left:455px;top:66px;width:229px;height:26px"></div>
<svg style="left:462px;top:73px" width="16" height="16" viewBox="0 0 16 16"><path d="M0 8L8 .6 16 8z" fill="#ff0000" stroke="#000" stroke-width=".8"/><rect x="1.5" y="7.5" width="13" height="8" fill="#ffff00" stroke="#000"/><rect x="5" y="10" width="3" height="5" fill="#00e0e0" stroke="#000" stroke-width=".7"/></svg>
<svg style="left:485px;top:73px" width="16" height="16" viewBox="0 0 16 16"><g fill="#fff" stroke="#000"><rect x=".5" y="1.5" width="9" height="9"/><rect x="3.5" y="4" width="9" height="9"/><rect x="6.5" y="6.5" width="9" height="9"/></g><g fill="#000080"><rect x="2" y="3" width="6" height="1.6"/><rect x="5" y="5.5" width="6" height="1.6"/><rect x="8" y="8" width="6" height="1.8"/></g></svg>
<svg style="left:508px;top:73px" width="16" height="16"><use href="#w"/><text x="8" y="13" text-anchor="middle" style="font-family:'Liberation Sans';font-weight:bold;font-size:9.7px" fill="#000" stroke="#000" stroke-width=".45" paint-order="stroke">H</text></svg>
<svg style="left:531px;top:73px" width="16" height="16" viewBox="0 0 16 16"><g stroke="#9a9a9a" stroke-width=".8"><path d="M0 2.5h16M0 6.5h16M0 10.5h16"/></g><path d="M2.5 0v14M0 13.5h16" stroke="#000" fill="none"/><path d="M4 15v1M7 15v1M10 15v1M13 15v1" stroke="#000"/><path d="M3 10l2-7 2.5 6L10 5l2 5 3-7" stroke="#0000ff" fill="none" stroke-width="1.1"/><path d="M3 11.5l2.5-4 2 3L10 8l2 1.5 3-5.5" stroke="#ff0000" fill="none" stroke-width="1.1"/></svg>
<svg style="left:554px;top:73px" width="16" height="16" viewBox="0 0 16 16"><path d="M2.5 1v13.5H16" stroke="#000" fill="none"/><path d="M0 3h2M0 6h2M0 9h2M0 12h2M5 14.5v1.5M8 14.5v1.5M11 14.5v1.5M14 14.5v1.5" stroke="#000" stroke-width=".8"/><path d="M3 13.5c4 0 6-1 8-2.5s3-2 5-2.5" stroke="#000" fill="none"/><text x="9.8" y="9" text-anchor="middle" font-family="Liberation Sans" font-weight="bold" font-size="11.5" fill="#ff0000" textLength="13" lengthAdjust="spacingAndGlyphs">3D</text></svg>
<div class="vs" style="left:576px;top:70px;height:20px"></div>
<svg style="left:585px;top:73px" width="16" height="16"><use href="#w"/><path d="M3 9l3.5 5.5L16 .5" stroke="#e00000" stroke-width="2.2" fill="none"/></svg>
<svg style="left:608px;top:73px" width="16" height="16"><use href="#w"/><rect x="7" y="5.5" width="2.4" height="5" fill="#000"/><rect x="7" y="11.5" width="2.4" height="2" fill="#000"/><circle cx="8" cy="8.3" r="6.6" fill="none" stroke="#ff0000" stroke-width="1.8"/><path d="M3.5 13L12.5 3.6" stroke="#ff0000" stroke-width="1.8"/></svg>
<svg style="left:631px;top:73px" width="16" height="16"><use href="#w"/><text x="8" y="13" text-anchor="middle" style="font-family:'Liberation Sans';font-weight:bold;font-size:9.7px" fill="#e00000" stroke="#e00000" stroke-width=".45" paint-order="stroke">0</text></svg>
<div class="vs" style="left:653px;top:70px;height:20px"></div><div class="vs" style="left:656px;top:70px;height:20px"></div>
<svg style="left:662px;top:73px" width="16" height="16" viewBox="0 0 16 16"><rect x="7.5" y="1.5" width="7.5" height="8" fill="#ff0000" stroke="#000" stroke-width=".8"/><path d="M1 11L8 5v6z" fill="#0000c0" stroke="#000" stroke-width=".6"/><circle cx="10" cy="11.5" r="3.8" fill="#00d000" stroke="#004000" stroke-width=".7"/></svg>
<div class="band" style="left:687px;top:62px;width:588px;height:33px;border-left-color:#a0a0a0"></div>
<div class="a" style="left:688px;top:63px;width:1px;height:31px;background:#fff"></div>
<div class="grip" style="left:690px;top:68px;height:22px"></div>
<div class="a" style="left:698px;top:67px;width:575.500px;height:26px;border:2px solid #800080;background:linear-gradient(#fff 0,#f6f6f6 45%,#e4e4e4 100%)"></div>
<div class="vs" style="left:703px;top:70px;height:20px"></div>
<div class="bt" style="left:706px;top:74px;letter-spacing:-.2px">Mod.:</div>
<div class="inp" style="left:743px;top:70px;width:33px;height:20px;border:1px solid #e3e3e3;border-radius:2px"></div><div class="t" style="left:745px;top:74px;font-size:11.5px;color:#8a8a8a">NO</div>
<svg style="left:780px;top:73px" width="16" height="16"><use href="#w"/><text x="8" y="13" text-anchor="middle" style="font-family:'Liberation Sans';font-weight:bold;font-size:9.7px" fill="#000" stroke="#000" stroke-width=".45" paint-order="stroke">K</text></svg>
<div class="vs" style="left:802px;top:70px;height:20px"></div>
<div class="t" style="left:806px;top:73px;font-size:14px;letter-spacing:0">+ -</div>
<div class="inp" style="left:829px;top:70px;width:50px;height:20px"></div><div class="t" style="left:832px;top:74px;font-size:12px">1</div>
<div class="spin" style="left:879px;top:69px"><i></i></div>
<div class="vs" style="left:898px;top:70px;height:20px"></div>
<div class="bt" style="left:902px;top:74px;letter-spacing:-.1px">Pg+ Pg-</div>
<div class="inp" style="left:954px;top:70px;width:49px;height:20px"></div><div class="t" style="left:957px;top:74px;font-size:12px">5</div>
<div class="spin" style="left:1003px;top:69px"><i></i></div>
<div class="vs" style="left:1021px;top:70px;height:20px"></div>
<div class="a" style="left:1027px;top:69px;width:23px;height:22px;border:1px solid #6b8fd6;background:#c9d8f2;border-radius:1px"></div>
<svg style="left:1030px;top:73px" width="16" height="16"><use href="#wg"/><text x="8" y="13" text-anchor="middle" style="font-family:'Liberation Sans';font-weight:bold;font-size:9.7px" fill="#000" stroke="#000" stroke-width=".45" paint-order="stroke">P</text></svg>
<div class="inp" style="left:1050px;top:70px;width:50px;height:20px"></div><div class="t" style="left:1053px;top:74px;font-size:12px">10,0%</div>
<div class="spin" style="left:1100px;top:69px"><i></i></div>
<div class="vs" style="left:1119px;top:70px;height:20px"></div>
<svg style="left:1128px;top:73px" width="16" height="16"><use href="#w"/><text x="8" y="13" text-anchor="middle" style="font-family:'Liberation Sans';font-weight:bold;font-size:9.7px" fill="#000" stroke="#000" stroke-width=".45" paint-order="stroke">m</text></svg>
<svg style="left:1151px;top:73px" width="16" height="16"><use href="#w"/><text x="8" y="13" text-anchor="middle" style="font-family:'Liberation Sans';font-weight:bold;font-size:9.7px" fill="#000" stroke="#000" stroke-width=".45" paint-order="stroke">M</text></svg>
<svg style="left:1174px;top:73px" width="16" height="16"><use href="#w"/><rect x="3" y="7" width="7" height="4.500" fill="#00e000"/><rect x="6" y="8" width="7" height="4.500" fill="#f00000"/><rect x="6" y="8" width="4" height="3.500" fill="#008000"/></svg>
<svg style="left:1197px;top:73px" width="16" height="16"><use href="#w"/><text x="8" y="13" text-anchor="middle" style="font-family:'Liberation Sans';font-weight:bold;font-size:9.7px" fill="#000" stroke="#000" stroke-width=".45" paint-order="stroke">S</text></svg>
<div class="vs" style="left:1219px;top:70px;height:20px"></div>
<svg style="left:1228px;top:73px" width="16" height="16"><use href="#w"/><text x="8" y="13" text-anchor="middle" style="font-family:'Liberation Sans';font-weight:bold;font-size:9.7px" fill="#000" stroke="#000" stroke-width=".45" paint-order="stroke">U</text></svg>
<svg style="left:1251px;top:72px" width="17" height="17" viewBox="0 0 17 17"><path d="M13.8 5.2A6.4 6.4 0 1 0 14.6 10" stroke="#ff0000" stroke-width="2" fill="none"/><path d="M9.5 1l6 1.2-3.2 4.6z" fill="#ff0000"/><rect x="6.6" y="4" width="2.6" height="6" fill="#000"/><rect x="6.6" y="11" width="2.6" height="2.4" fill="#000"/></svg>
<div class="band" style="left:443px;top:98px;width:191px;height:33px"></div>
<div class="grip" style="left:447px;top:104px;height:22px"></div>
<div class="tbx" style="left:455px;top:102px;width:177px;height:26px"></div>
<svg style="left:462px;top:109px" width="16" height="16" viewBox="0 0 16 16"><path d="M1 15V4h4l1 1.5h6V8" fill="#ffff80" stroke="#000" stroke-width=".8"/><path d="M1 15l3-7h12l-3.5 7z" fill="#808000" stroke="#000" stroke-width=".8"/><path d="M9 2.5c2-2 4.500-1.500 5.500.5" stroke="#000" fill="none" stroke-width=".9"/><path d="M13.300 1l1.700 2.600-3 .2z" fill="#000"/></svg>
<svg style="left:485px;top:109px" width="16" height="16"><use href="#fl"/><text x="8" y="7.5" text-anchor="middle" font-family="Liberation Sans" font-weight="bold" font-size="8" fill="#e00000">D</text></svg>
<svg style="left:508px;top:109px" width="16" height="16"><use href="#fl"/><text x="8" y="7.5" text-anchor="middle" font-family="Liberation Serif" font-weight="bold" font-size="8" fill="#e00000">I</text></svg>
<div class="vs" style="left:530px;top:106px;height:20px"></div><div class="vs" style="left:533px;top:106px;height:20px"></div>
<svg style="left:541px;top:109px" width="16" height="16"><use href="#wg"/><text x="8" y="13" text-anchor="middle" style="font-family:'Liberation Sans';font-weight:bold;font-size:10.6px" fill="#000" stroke="#000" stroke-width=".5" paint-order="stroke">D</text></svg>
<svg style="left:564px;top:109px" width="16" height="16"><use href="#wg"/><text x="8" y="13" text-anchor="middle" style="font-family:'Liberation Sans';font-weight:bold;font-size:10.6px" fill="#000" stroke="#000" stroke-width=".5" paint-order="stroke">O</text></svg>
<div class="a" style="left:584px;top:105px;width:23px;height:22px;border:1px solid #7da2e0;background:#cfdcf3;border-radius:1px"></div>
<svg style="left:587px;top:109px" width="16" height="16"><use href="#wg"/><text x="8" y="13" text-anchor="middle" style="font-family:'Liberation Serif';font-weight:bold;font-size:10.6px" fill="#000" stroke="#000" stroke-width=".5" paint-order="stroke">I</text></svg>
<svg style="left:611px;top:110px" width="14" height="14" viewBox="0 0 14 14"><rect x=".5" y=".5" width="12.500" height="13" fill="#9c9c9c" stroke="#000080"/><rect x="1" y="1" width="12" height="2" fill="#000080"/><rect x="1" y="3" width="6" height="10" fill="#fff"/></svg>
<div class="band" style="left:635px;top:98px;width:333px;height:33px;border-left-color:#a0a0a0"></div>
<div class="a" style="left:636px;top:99px;width:1px;height:31px;background:#fff"></div>
<div class="grip" style="left:639px;top:104px;height:22px"></div>
<div class="tbx" style="left:646px;top:102px;width:320px;height:26px"></div>
<svg style="left:652px;top:109px" width="16" height="16"><use href="#w"/><text x="8" y="13" text-anchor="middle" style="font-family:'Liberation Sans';font-weight:bold;font-size:10.6px" fill="#000" stroke="#000" stroke-width=".5" paint-order="stroke">T</text></svg>
<svg style="left:674px;top:107px" width="18" height="19" viewBox="0 0 18 19"><path d="M7 10V6.500a3.500 3.500 0 0 1 7 0V8" fill="none" stroke="#404040" stroke-width="2"/><path d="M7 10V6.500a3.500 3.500 0 0 1 7 0V8" fill="none" stroke="#d8d8d8" stroke-width=".8"/><rect x="4" y="9.500" width="12" height="8.500" rx="1.500" fill="#b8b8b8" stroke="#202020"/><path d="M5 12h10M5 14h10M5 16h10" stroke="#707070" stroke-width=".7"/><rect x="9" y="12" width="2" height="4" fill="#202020"/><path d="M0 5l4 2M1 1.500l3.500 3.500M4.500 0l1 4" stroke="#f0e000" stroke-width="1.200"/></svg>
<svg style="left:700px;top:109px" width="12" height="16" viewBox="0 0 12 16"><rect width="12" height="9" fill="#00ffff"/><rect y="9" width="12" height="7" fill="#ffff00"/><circle cx="6.800" cy="3" r="1.400" fill="#000"/><path d="M6.600 4.500L5.200 9.500M6.400 5.300L3.300 7.800M6.600 5.600L8.800 7.800M5.200 9.500L2.800 13.800M5.200 9.500L8 11.300l2.600 1.200" stroke="#000" stroke-width="1.400" fill="none" stroke-linecap="round"/></svg>
<svg style="left:720px;top:108px" width="16" height="16"><use href="#kn"/></svg>
<div class="vs" style="left:743px;top:106px;height:20px"></div>
<div class="bt" style="left:746px;top:110px;letter-spacing:-.55px">SCAN</div>
<div class="a" style="left:783px;top:106px;width:66px;height:20px;border:1px solid #8e8f8f;border-radius:3px;background:linear-gradient(90deg,#fff 0 46px,#ededed 46px)"></div>
<div class="a" style="left:836px;top:114px;border:4px solid transparent;border-bottom:0;border-top:4px solid #000"></div>
<div class="vs" style="left:851px;top:106px;height:20px"></div>
<div class="bt" style="left:854px;top:110px;letter-spacing:-.4px">EMU</div>
<svg style="left:887px;top:108px" width="16" height="16"><use href="#kn"/></svg>
<div class="vs" style="left:910px;top:106px;height:20px"></div>
<div class="bt" style="left:913px;top:110px;letter-spacing:-.4px">REC</div>
<svg style="left:944px;top:108px" width="16" height="16"><use href="#kn"/></svg>
<div class="a" id="grid">
<div class="hc" style="left:0;width:75px;border-left:0">Load|RPM</div>
<div class="hc" style="left:74px;width:52px">100</div>
<div class="hc" style="left:125px;width:52px">200</div>
<div class="hc" style="left:176px;width:52px">600</div>
<div class="hc" style="left:227px;width:52px">800</div>
<div class="hc" style="left:278px;width:52px">1000</div>
<div class="hc" style="left:329px;width:52px">1250</div>
<div class="hc" style="left:380px;width:52px">1500</div>
<div class="hc" style="left:431px;width:52px">1750</div>
<div class="hc" style="left:482px;width:52px">2000</div>
<div class="hc" style="left:533px;width:52px">2500</div>
<div class="hc" style="left:584px;width:52px">3000</div>
<div class="hc" style="left:635px;width:52px">3500</div>
<div class="hc" style="left:686px;width:52px">3800</div>
<div class="hc" style="left:737px;width:52px">4000</div>
<div class="hc" style="left:788px;width:52px">4500</div>
<div class="rh" style="top:21px">7</div><div class="row" style="top:21px"><span>0,0</span><span>0,0</span><span>0,0</span><span>0,0</span><span>0,0</span><span>0,0</span><span>0,0</span><span>0,0</span><span>0,0</span><span>0,0</span><span>0,0</span><span>0,0</span><span>0,0</span><span>0,0</span><span>0,0</span></div>
<div class="rh" style="top:40px">13</div><div class="row" style="top:40px"><span>0,0</span><span>0,0</span><span>0,0</span><span>0,0</span><span>0,0</span><span>0,0</span><span>0,0</span><span>0,0</span><span>0,0</span><span>0,0</span><span>0,0</span><span>0,0</span><span>0,0</span><span>0,0</span><span>0,0</span></div>
<div class="rh" style="top:59px">20</div><div class="row" style="top:59px"><span>0,0</span><span>0,0</span><span>0,0</span><span>0,0</span><span>0,0</span><span>0,0</span><span>0,0</span><span>0,0</span><span>0,0</span><span>0,0</span><span>0,0</span><span>0,0</span><span>0,0</span><span>0,0</span><span>0,0</span></div>
<div class="rh" style="top:78px">27</div><div class="row" style="top:78px"><span>0,0</span><span>0,0</span><span>0,0</span><span>0,0</span><span>0,0</span><span>0,0</span><span>0,0</span><span>0,0</span><span>0,0</span><span>0,0</span><span>0,0</span><span>0,0</span><span>0,0</span><span>0,0</span><span>0,0</span></div>
<div class="rh" style="top:97px">33</div><div class="row" style="top:97px"><span>0,0</span><span>0,0</span><span>0,0</span><span>0,0</span><span>0,0</span><span>0,0</span><span>0,0</span><span>0,0</span><span>0,0</span><span>0,0</span><span>0,0</span><span>0,0</span><span>0,0</span><span>0,0</span><span>0,0</span></div>
<div class="rh" style="top:116px">40</div><div class="row" style="top:116px"><span>0,0</span><span>0,0</span><span>0,0</span><span>0,0</span><span>0,0</span><span>0,0</span><span>0,0</span><span>0,0</span><span>0,0</span><span>0,0</span><span>0,0</span><span>0,0</span><span>0,0</span><span>0,0</span><span>0,0</span></div>
<div class="rh" style="top:135px">47</div><div class="row" style="top:135px"><span>0,0</span><span>0,0</span><span>0,0</span><span>0,0</span><span>0,0</span><span>0,0</span><span>0,0</span><span>0,0</span><span>0,0</span><span>0,0</span><span>0,0</span><span>0,0</span><span>0,0</span><span>0,0</span><span>0,0</span></div>
<div class="rh" style="top:154px">53</div><div class="row" style="top:154px"><span>0,0</span><span>0,0</span><span>0,0</span><span>0,0</span><span>0,0</span><span>0,0</span><span>0,0</span><span>0,0</span><span>0,0</span><span>0,0</span><span>0,0</span><span>0,0</span><span>0,0</span><span>0,0</span><span>0,0</span></div>
<div class="rh" style="top:173px">60</div><div class="row" style="top:173px"><span>0,0</span><span>0,0</span><span>0,0</span><span>0,0</span><span>0,0</span><span>0,0</span><span>0,0</span><span>0,0</span><span>0,0</span><span>0,0</span><span>0,0</span><span>0,0</span><span>0,0</span><span>0,0</span><span>0,0</span></div>
<div class="rh" style="top:192px">67</div><div class="row" style="top:192px"><span>0,0</span><span>0,0</span><span>0,0</span><span>0,0</span><span>0,0</span><span>0,0</span><span>0,0</span><span>0,0</span><span>0,0</span><span>0,0</span><span>0,0</span><span>0,0</span><span>0,0</span><span>0,0</span><span>0,0</span></div>
<div class="rh" style="top:211px">73</div><div class="row" style="top:211px"><span>0,0</span><span>0,0</span><span>0,0</span><span>0,0</span><span>0,0</span><span>0,0</span><span>0,0</span><span>0,0</span><span>0,0</span><span>0,0</span><span>0,0</span><span>0,0</span><span>0,0</span><span>0,0</span><span>0,0</span></div>
<div class="rh" style="top:230px">80</div><div class="row" style="top:230px"><span>0,0</span><span>0,0</span><span>0,0</span><span>0,0</span><span>0,0</span><span>0,0</span><span>0,0</span><span>0,0</span><span>0,0</span><span>0,0</span><span>0,0</span><span>0,0</span><span>0,0</span><span>0,0</span><span>0,0</span></div>
<div class="rh" style="top:249px">87</div><div class="row" style="top:249px"><span>0,0</span><span>0,0</span><span>0,0</span><span>0,0</span><span>0,0</span><span>0,0</span><span>0,0</span><span>0,0</span><span>0,0</span><span>0,0</span><span>0,0</span><span>0,0</span><span>0,0</span><span>0,0</span><span>0,0</span></div>
<div class="rh" style="top:268px">93</div><div class="row" style="top:268px"><span>0,0</span><span>0,0</span><span>0,0</span><span>0,0</span><span>0,0</span><span>0,0</span><span>0,0</span><span>0,0</span><span>0,0</span><span>0,0</span><span>0,0</span><span>0,0</span><span>0,0</span><span>0,0</span><span>0,0</span></div>
<div class="rh" style="top:287px">100</div><div class="row" style="top:287px"><span>0,0</span><span>0,0</span><span>0,0</span><span>0,0</span><span>0,0</span><span>0,0</span><span>0,0</span><span>0,0</span><span>0,0</span><span>0,0</span><span>0,0</span><span>0,0</span><span>0,0</span><span>0,0</span><span>0,0</span></div>
</div>
<div class="a" id="gblack"></div>

<div class="a" id="ehs"></div>
<div class="a" style="left:462px;top:585px;width:15px;height:15px;border:1px solid #8e8e8e;border-radius:2px;background:linear-gradient(#f6f6f6 0,#e9e9e9 48%,#d2d2d2 52%,#cdcdcd 100%);box-shadow:inset 0 0 0 1px #fbfbfb"></div>
<div class="a" style="left:450px;top:589px;border:3.500px solid transparent;border-left:0;border-right:4px solid #222"></div>
<div class="a" style="left:1265px;top:589px;border:3.500px solid transparent;border-right:0;border-left:4px solid #222"></div>
<div class="a" style="left:442px;top:602px;width:842px;height:1px;background:#fff"></div>
<div class="a" id="eblue"></div>
<div class="t" style="left:582px;top:630.500px;font-size:17.5px;color:#ffff00;letter-spacing:.49px">Press Page+/Page- to scroll through similar maps, Enter to confirm</div>
<div class="a" style="left:442px;top:674px;width:842px;height:1px;background:#8c8c8c"></div>
<div class="a" style="left:1278px;top:135px;width:6px;height:540px;background:linear-gradient(90deg,#e8e8e8 0 1px,#505050 1px 3px,#f0f0f0 3px 4px,#404040 4px 5px,#f0f0f0 5px)"></div><div class="a" id="estat"></div>
<div class="sp" style="left:862px;width:83px"><b style="transform:scaleX(0.988)">Map 1 of 2</b></div>
<div class="sp" style="left:946px;width:84px"><b style="transform:scaleX(0.922)">Add. 0x54F70</b></div>
<div class="sp" style="left:1030px;width:84px"><b style="transform:scaleX(0.856)">Size 15x16</b></div>
<div class="sp" style="left:1114px;width:84px"><b style="transform:scaleX(0.894)">K = 64</b></div>
<div class="sp" style="left:1198px;width:70px;overflow:hidden"><b style="transform:scaleX(0.960)">Checksum: 3</b></div>


<svg style="left:1273px;top:681px" width="10" height="10" viewBox="0 0 10 10" fill="#b8b4b2"><rect x="7" y="1" width="2" height="2"/><rect x="4" y="4" width="2" height="2"/><rect x="7" y="4" width="2" height="2"/><rect x="1" y="7" width="2" height="2"/><rect x="4" y="7" width="2" height="2"/><rect x="7" y="7" width="2" height="2"/></svg>
<!-- ================= PAINT STATUS ================= -->
<div class="a" id="pstatus"></div>
<svg style="left:3px;top:709.500px" width="13" height="13" viewBox="0 0 14 14"><path d="M7 0v14M0 7h14" stroke="#303848" stroke-width="1.200"/><path d="M7 0l-2 2.500h4zM7 14l-2-2.500h4zM0 7l2.500-2v4zM14 7l-2.500-2v4z" fill="#303848"/></svg>
<div class="t" style="left:21.500px;top:710px;font-size:12px;transform-origin:0 0;transform:scaleX(.917)">1326, 163px</div>
<div class="a" style="left:156px;top:705px;width:1px;height:21px;background:#d8d4d2"></div>
<div class="a" style="left:312px;top:705px;width:1px;height:21px;background:#d8d4d2"></div>
<div class="a" style="left:469px;top:705px;width:1px;height:21px;background:#d8d4d2"></div>
<div class="a" style="left:624px;top:705px;width:1px;height:21px;background:#d8d4d2"></div>
<div class="a" style="left:1167px;top:705px;width:1px;height:21px;background:#d8d4d2"></div>
<svg style="left:162px;top:709px" width="14" height="14" viewBox="0 0 14 14"><path d="M1 0v5M0 1.500l1-1.500 1 1.500" stroke="#303848" fill="none" stroke-width=".9"/><rect x="4.500" y="2.500" width="8" height="7" fill="none" stroke="#303848" stroke-dasharray="2 1"/><path d="M5 12.500h8M11.500 11l1.500 1.500-1.500 1.500" stroke="#303848" fill="none" stroke-width=".9"/></svg>
<svg style="left:318px;top:709px" width="14" height="14" viewBox="0 0 14 14"><path d="M1 0v5M0 1.500l1-1.500 1 1.500" stroke="#303848" fill="none" stroke-width=".9"/><rect x="4.500" y="2.500" width="8" height="7" fill="none" stroke="#303848" stroke-width="1.200"/><path d="M5 12.500h8M11.500 11l1.500 1.500-1.500 1.500" stroke="#303848" fill="none" stroke-width=".9"/></svg>
<div class="t" style="left:335.700px;top:710px;font-size:12px;transform-origin:0 0;transform:scaleX(.948)">1366 × 768px</div>
<svg style="left:474px;top:710px" width="12" height="12" viewBox="0 0 12 12"><path d="M.5.500h9.500l1.500 1.500v9.500H.5z" fill="#fff" stroke="#303848"/><rect x="2.500" y="1" width="6" height="3.500" fill="#303848"/><rect x="3" y="7" width="6" height="4.500" fill="#303848"/><rect x="4" y="8" width="2" height="2.500" fill="#fff"/></svg>
<div class="t" style="left:492px;top:710px;font-size:12px;transform-origin:0 0;transform:scaleX(.872)">Size: 77,0KB</div>
<div class="t" style="left:1189px;top:710px;font-size:12px;transform-origin:0 0;transform:scaleX(.94)">100%</div>
<div class="a" style="left:1224px;top:707px;width:16px;height:16px;border:1px solid #8a8a8a;border-radius:50%;background:linear-gradient(#fdfdfd,#e4e4e4)"></div><div class="a" style="left:1228px;top:714px;width:8px;height:2px;background:#505050"></div>
<div class="a" style="left:1250px;top:714px;width:84px;height:2px;background:linear-gradient(#bdbdbd 0 1px,#fff 1px)"></div>
<svg style="left:1287px;top:706px" width="11" height="19" viewBox="0 0 11 19"><path d="M1 1.500a1 1 0 0 1 1-1h7a1 1 0 0 1 1 1V13l-4.500 5L1 13z" fill="#e8e8e8" stroke="#707070"/><path d="M2.500 2h3v11.500l-3-1z" fill="#fafafa"/></svg>
<div class="a" style="left:1346px;top:707px;width:16px;height:16px;border:1px solid #8a8a8a;border-radius:50%;background:linear-gradient(#fdfdfd,#e4e4e4)"></div><div class="a" style="left:1350px;top:714px;width:8px;height:2px;background:#505050"></div><div class="a" style="left:1353px;top:711px;width:2px;height:8px;background:#505050"></div>

<!-- ================= TASKBAR ================= -->
<div class="a" id="task"></div><div class="a" id="tband"></div>
<svg style="left:8px;top:729px" width="38" height="38" viewBox="0 0 38 38"><defs><linearGradient id="og" x1="0" y1="0" x2="0" y2="1"><stop offset="0" stop-color="#b9d6ec"/><stop offset=".42" stop-color="#4f97cf"/><stop offset=".5" stop-color="#0e4f95"/><stop offset=".8" stop-color="#0b5aa6"/><stop offset="1" stop-color="#19b8ee"/></linearGradient><radialGradient id="og2" cx=".5" cy="1.02" r=".55"><stop offset="0" stop-color="#30e8ff" stop-opacity="1"/><stop offset="1" stop-color="#30e8ff" stop-opacity="0"/></radialGradient></defs><circle cx="19" cy="19" r="17.800" fill="url(#og)" stroke="#0d3f7a" stroke-width="1.200"/><circle cx="19" cy="19" r="17" fill="url(#og2)"/><circle cx="19" cy="19" r="16.600" fill="none" stroke="#d8ecfa" stroke-width=".7" opacity=".6"/>
<path d="M10.800 9.500c3-1.800 5.800-1.600 8.200.1l-1.700 8.300c-2.500-1.700-5-1.900-8.200-.2z" fill="#f0561f"/><path d="M20.600 10.200c2.600 1.700 5.300 1.600 8.400-.3l-1.800 8.300c-2.900 1.800-5.600 1.900-8.300.3z" fill="#85c13c"/><path d="M8.500 19.600c3.100-1.700 5.700-1.500 8.200.2l-1.800 8.300c-2.500-1.700-5-1.900-8.100-.2z" fill="#19a2e8"/><path d="M18.300 20.400c2.700 1.600 5.400 1.500 8.400-.3l-1.800 8.300c-2.900 1.800-5.600 1.900-8.300.3z" fill="#fbc013"/><path d="M10.800 9.500c3-1.800 5.800-1.600 8.200.1l-.5 2.500c-2.500-1.600-5.200-1.600-8.100-.2z" fill="#fff" opacity=".25"/></svg>
<div class="tb" style="left:58px;width:59px"></div>
<div class="tb" style="left:120px;width:59px"></div>
<div class="tb" style="left:186px;width:54px"></div><div class="tb" style="left:182px;width:54px"></div>
<div class="tb" style="left:244px;width:59px;background:linear-gradient(#e4edf7 0,#d3e0ef 46%,#c2d3e7 52%,#cddcec 100%)"></div>
<div class="tb" style="left:314px;width:51px"></div><div class="tb" style="left:310px;width:51px"></div><div class="tb" style="left:306px;width:51px"></div>
<div class="tb" style="left:368px;width:59px;background:linear-gradient(#e4edf7 0,#d3e0ef 46%,#c2d3e7 52%,#cddcec 100%)"></div>
<svg style="left:71px;top:735px" width="30" height="25" viewBox="0 0 30 25"><defs><linearGradient id="i1" x1="0" y1="0" x2="1" y2="1"><stop offset="0" stop-color="#5a8cc0"/><stop offset=".5" stop-color="#4c9890"/><stop offset="1" stop-color="#5cb060"/></linearGradient></defs><rect x=".5" y=".5" width="29" height="24" fill="#fbfbfb" stroke="#9ca0a8"/><rect x="3" y="5" width="11" height="16" fill="url(#i1)" stroke="#c8c0d8" stroke-width=".6"/><path d="M17 5.500h6M17 8h6M17 10.500h6M17 13h6M17 15.500h6M17 18.500h6M17 21h6" stroke="#b0b4bc" stroke-width=".8"/><rect x="25" y="5" width="2" height="9" fill="#2a50a8"/><rect x="25" y="9.500" width="2" height="4.500" fill="#4aa050"/><path d="M23 2h1M25 2h1M27 2h1" stroke="#707888"/></svg>
<svg style="left:133px;top:731px" width="32" height="33" viewBox="0 0 32 33"><defs><linearGradient id="ff" x1=".85" y1=".1" x2=".2" y2=".95"><stop offset="0" stop-color="#fff14a"/><stop offset=".3" stop-color="#ffb521"/><stop offset=".62" stop-color="#ff5c1f"/><stop offset="1" stop-color="#f5206a"/></linearGradient><linearGradient id="fg" x1="0" y1="0" x2="0" y2="1"><stop offset="0" stop-color="#1d8af0"/><stop offset=".6" stop-color="#2a3fd0"/><stop offset="1" stop-color="#5a22a8"/></linearGradient></defs><circle cx="16" cy="18.500" r="14.300" fill="url(#ff)"/><path d="M20.500 1.500c-1.800 2.200-2 5-.6 7.600 3.800 2.200 5.400 6.200 4.200 10.500l5.400 1.800c2.300-7.500-.8-15.400-9-19.900z" fill="#ffe437"/><circle cx="16.500" cy="16.500" r="8.200" fill="url(#fg)"/><path d="M5 9.500c.8-1.800 1.800-3.200 2.600-3.800.1 1.600.6 2.600 1.600 3.400 1.800-1.100 3.800-1.500 5.600-1-1.700.6-2.700 1.700-3.100 3 1.600.9 3.300.9 4.600.2-.1 1.600-1.600 2.900-3.600 3-1.400 0-2.300.9-2.200 2 .2 1.700 2.300 2.600 4.800 2.400 2.200-.2 3.800-1.200 4.600-2.600.3 3.800-2.600 7.200-6.900 7.400-4.800.3-8.700-3.200-9.200-8-.2-2.100.3-4.200 1.200-6z" fill="#ff7a18"/><path d="M5 9.500c.8-1.800 1.800-3.200 2.600-3.800.1 1.600.6 2.600 1.600 3.400-1.500 1-2.600 2.400-3.200 4-.7-.9-1.100-2.300-1-3.600z" fill="#ff4a1a"/></svg>
<svg style="left:192px;top:733px" width="33" height="30" viewBox="0 0 33 30"><path d="M1.500 3.500a1.500 1.500 0 0 1 1.500-1.500h12a1.500 1.500 0 0 1 1.500 1.500V9H1.500z" fill="#f3dc8c" stroke="#c9a94e" stroke-width=".8"/><rect x="4" y="3" width="3" height="2" fill="#20b030"/><rect x="8" y="3" width="7" height="2" fill="#fff"/><path d="M10 5.500a1.500 1.500 0 0 1 1.500-1.500h18a1.500 1.500 0 0 1 1.500 1.500V11H10z" fill="#f1d67e" stroke="#c9a94e" stroke-width=".8"/><rect x="12" y="5" width="3" height="2" fill="#d02020"/><rect x="16" y="5" width="6" height="2" fill="#fff"/><path d="M18 8a1.500 1.500 0 0 1 1.500-1.500h10.500a1.500 1.500 0 0 1 1.500 1.500v4H18z" fill="#f3dc8c" stroke="#c9a94e" stroke-width=".8"/><rect x="20" y="7.500" width="3" height="2" fill="#1a90e8"/><rect x="24" y="7.500" width="5" height="2" fill="#fff"/><path d="M1.500 9h15.500l2 2.500h13V26.500a1 1 0 0 1-1 1H2.500a1 1 0 0 1-1-1z" fill="#f9e9ab" stroke="#c9a94e" stroke-width=".8"/><path d="M5.500 29.500V21a2 2 0 0 1 2-2h18a2 2 0 0 1 2 2v8.500h-5.500V24H11v5.500z" fill="#8fd0f2" stroke="#3a94d0" stroke-width=".9"/><path d="M7 20.500h19" stroke="#e4f6ff" stroke-width="1.600"/><path d="M8.500 14l1 4.500 4 1.500-4 1.500-1 4.500-1-4.500-4-1.500 4-1.500z" fill="#fff" opacity=".95"/></svg>
<svg style="left:256px;top:732px" width="34" height="31" viewBox="0 0 34 31"><path d="M8 1.500h22a2.500 2.500 0 0 1 2.500 3L28 27a3 3 0 0 1-3 2.500H3.500a2 2 0 0 1-2-2.500L5.500 4a3 3 0 0 1 2.500-2.500z" fill="#b8b8b8" stroke="#808080"/><path d="M9.500 4h19.500a1.500 1.500 0 0 1 1.500 2L26.500 25a2 2 0 0 1-2 1.700H5.500a1.500 1.500 0 0 1-1.500-2L7.500 5.700a2 2 0 0 1 2-1.700z" fill="#d8261c"/><path d="M10 5.500h18l-1 5H9z" fill="#f05a4a" opacity=".8"/><path d="M11 9h16.500l-1 5H16l-.8 4h10l-1 5H8z" fill="#141010"/><path d="M13 7h13" stroke="#ffd0c8" stroke-width="1.600" opacity=".9"/></svg>
<svg style="left:315px;top:732px" width="33" height="33" viewBox="0 0 33 33"><ellipse cx="16.500" cy="19" rx="15.500" ry="12.500" fill="#101010"/><ellipse cx="16.500" cy="15" rx="15.500" ry="13" fill="#101010"/><ellipse cx="16.500" cy="14.500" rx="13.300" ry="11" fill="#f8d010"/><ellipse cx="16.500" cy="11" rx="10" ry="5.500" fill="#fff070" opacity=".7"/><path d="M9.500 18c0-3 3-6 7-6s6 2 6 3.500-1.500 2-3 2-2 .5-2 1.500 1.500 1.500 3 1c0 2-2.500 3-5 3s-6-2-6-5z" fill="#101010"/><ellipse cx="10" cy="10.500" rx="1.600" ry="1.200" fill="#101010"/><ellipse cx="13.500" cy="8.200" rx="1.600" ry="1.300" fill="#101010"/><ellipse cx="17.500" cy="7.300" rx="1.700" ry="1.400" fill="#101010"/><ellipse cx="22.500" cy="8" rx="3" ry="1.800" transform="rotate(-20 22.500 8)" fill="#101010"/></svg>
<svg style="left:379px;top:731px" width="36" height="34" viewBox="0 0 36 34"><path d="M2 20c0-8 7-14 15-13 5 .5 7 4 6 7.500-1 3.500 1 5-1 9-2 3.500-6 3-8 1.500s-4-2-6 0c-3 2.500-6-.5-6-5z" fill="#dce8f4" stroke="#7a94b8" stroke-width="1"/><circle cx="7" cy="17" r="2.300" fill="#e04040"/><circle cx="11.500" cy="11.500" r="2.300" fill="#40b040"/><circle cx="18" cy="10" r="2.300" fill="#f0b020"/><circle cx="15" cy="19" r="2.300" fill="#a0c0e8" stroke="#6a8ab8" stroke-width=".6"/><path d="M29 2l4.500-1.500 1.500 2.500-2 5-4-.5z" fill="#d8a868" stroke="#a07838" stroke-width=".6"/><path d="M28.500 7.500l3.500.8L23 32l-2-.5z" fill="#f08828" stroke="#b85810" stroke-width=".5"/></svg>
<div class="a" style="left:1154px;top:746px;border:5px solid transparent;border-top:0;border-bottom:5px solid #fff"></div>
<svg style="left:1175px;top:739px" width="17" height="20" viewBox="0 0 17 20"><rect x="1" y="3" width="9" height="15" rx="1" fill="none" stroke="#fff" stroke-width="1.500"/><rect x="3" y="1" width="5" height="2" fill="#fff"/><path d="M8 4h7v5c0 2-1.500 3-3.500 3S8 11 8 9z" fill="#fff" stroke="#3a4658" stroke-width=".8"/><path d="M10 1v4M13 1v4" stroke="#fff" stroke-width="1.600"/><path d="M11.500 12v4c0 1.500-1 2-2.500 2" stroke="#fff" stroke-width="1.600" fill="none"/></svg>
<svg style="left:1199px;top:740px" width="18" height="18" viewBox="0 0 18 18"><path d="M1 6h3l4-4v14l-4-4H1z" fill="#fff" stroke="#4a5668" stroke-width=".6"/><path d="M10.500 6c1.200 1.500 1.200 4.500 0 6M12.800 4c2.200 2.500 2.200 7.500 0 10M15 2c3 4 3 10 0 14" stroke="#fff" stroke-width="1.300" fill="none"/></svg>
<svg style="left:1223px;top:741px" width="20" height="18" viewBox="0 0 20 18"><g fill="#d4dce8" stroke="#5a6678" stroke-width=".6"><rect x="1" y="12" width="3" height="4"/><rect x="5" y="9" width="3" height="7"/><rect x="9" y="6" width="3" height="10"/><rect x="13" y="2" width="3" height="14"/></g><path d="M8 9l8 8M16 9l-8 8" stroke="#e01010" stroke-width="2.200"/></svg>
<svg style="left:1248px;top:739px" width="20" height="20" viewBox="0 0 20 20"><path d="M2 1v18" stroke="#fff" stroke-width="1.800"/><path d="M3 2c3-1.500 5 1.500 9 0v8c-4 1.500-6-1.500-9 0z" fill="#fff" stroke="#4a5668" stroke-width=".5"/><circle cx="12.500" cy="13.500" r="5" fill="#e02020" stroke="#fff" stroke-width=".8"/><path d="M10.500 11.500l4 4M14.500 11.500l-4 4" stroke="#fff" stroke-width="1.500"/></svg>
<div class="t" style="left:1296px;top:735px;font-size:12px;color:#fff">16:06</div>
<div class="t" style="left:1282px;top:752px;font-size:12px;color:#fff;letter-spacing:-.15px">14/11/2018</div>
<div class="a" style="left:1352px;top:728px;width:14px;height:40px;border-left:1px solid #4c5a70;background:linear-gradient(#9aaec8 0,#6f839f 45%,#5a6e8a 55%,#70849f 100%);box-shadow:inset 1px 0 0 rgba(255,255,255,.35)"></div>
</body></html>
